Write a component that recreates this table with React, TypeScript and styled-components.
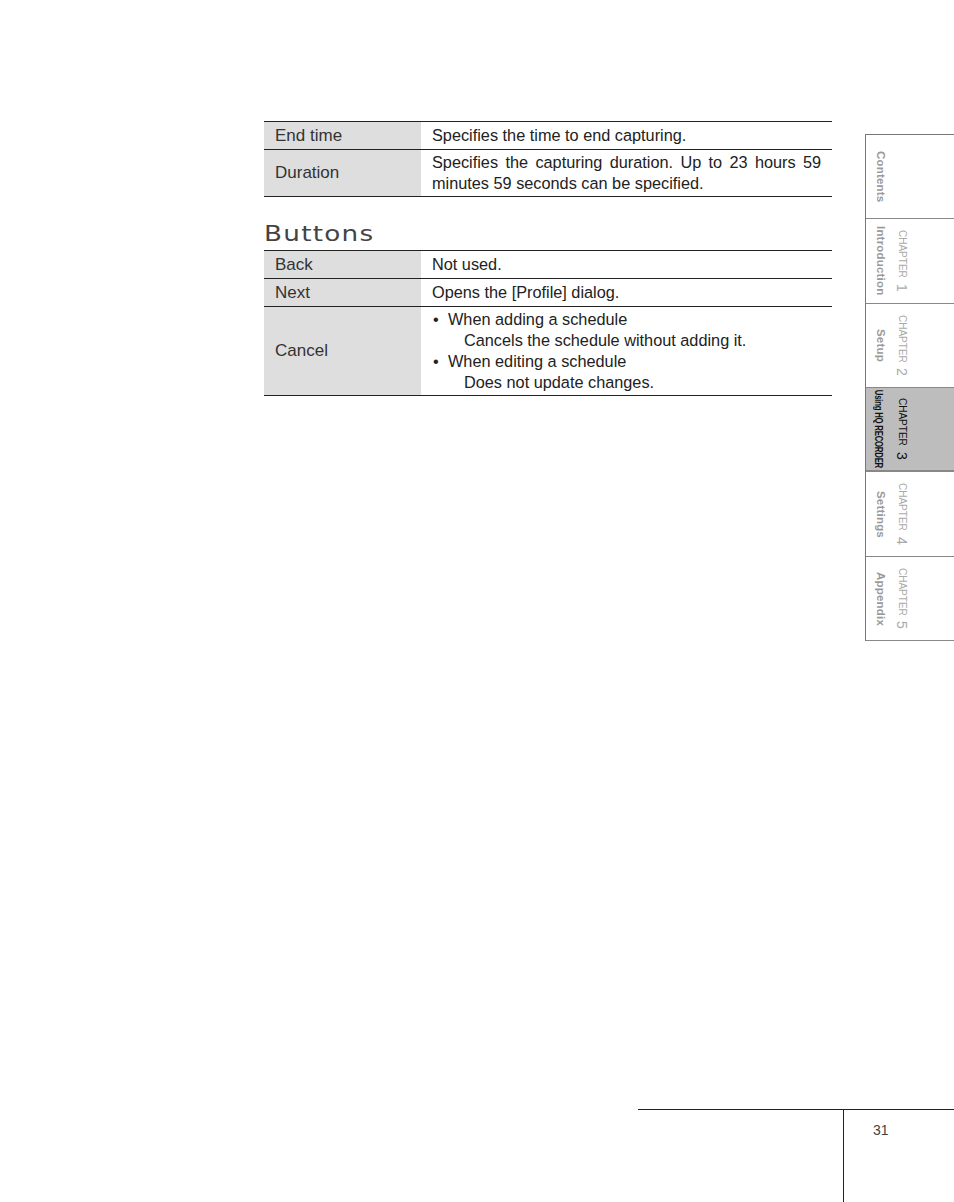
import React from "react";
import styled, { createGlobalStyle } from "styled-components";

const Global = createGlobalStyle`
  html, body { margin: 0; padding: 0; background: #fff; }
  body { font-family: "Liberation Sans", Arial, sans-serif; }
`;

const Page = styled.div`
  width: 954px;
  height: 1202px;
  display: flex;
  flex-direction: column;
  overflow: hidden;
`;

const Top = styled.div`
  display: flex;
  align-items: flex-start;
`;

const Main = styled.main`
  margin-left: 264px;
  padding-top: 121px;
  width: 569px;
`;

const Table = styled.div`
  border-top: 1px solid #222;
  display: flex;
  flex-direction: column;
`;

const Row = styled.div`
  display: grid;
  grid-template-columns: 157px 1fr;
  min-height: 27px;
  border-bottom: 1px solid #222;
`;

const Label = styled.div`
  background: #dedede;
  display: flex;
  align-items: center;
  padding: 0 11px;
  font-size: 17px;
  color: #333;
`;

const Desc = styled.div`
  padding: 2px 11px;
  display: flex;
  flex-direction: column;
  justify-content: center;
  font-size: 16.3px;
  line-height: 21px;
  color: #222;
  text-align: justify;
`;

const Bullet = styled.div`
  display: flex;
  padding-left: 1px;
  &::before {
    content: "•";
    width: 15px;
  }
`;

const Sub = styled.div`
  padding-left: 32px;
`;

const Heading = styled.h2`
  margin: 24px 0 2px;
  font-family: "DejaVu Sans", sans-serif;
  font-weight: 400;
  font-size: 21px;
  line-height: 27px;
  letter-spacing: 1px;
  color: #444;
  transform: scaleX(1.25);
  transform-origin: left center;
`;

const Side = styled.nav`
  margin-left: 33px;
  margin-top: 134px;
  width: 88px;
  border-left: 1px solid #777;
  border-top: 1px solid #777;
  display: flex;
  flex-direction: column;
`;

const Tab = styled.div<{ $active?: boolean; $h: number }>`
  height: ${(p) => p.$h}px;
  box-sizing: border-box;
  border-bottom: ${(p) => (p.$active ? 2 : 1)}px solid #888;
  background: ${(p) => (p.$active ? "#bdbdbd" : "#fff")};
  display: flex;
  padding-left: ${(p) => (p.$active ? 7 : 9)}px;
  gap: ${(p) => (p.$active ? 12 : 10)}px;
`;

const Vert = styled.div`
  writing-mode: vertical-rl;
  align-self: center;
  white-space: nowrap;
`;

const TabName = styled(Vert)<{ $active?: boolean }>`
  font-size: ${(p) => (p.$active ? "10.5px" : "11.5px")};
  font-weight: bold;
  color: ${(p) => (p.$active ? "#111" : "#9a9a9a")};
  letter-spacing: ${(p) => (p.$active ? "-0.3px" : "0.2px")};
  transform: ${(p) => (p.$active ? "scaleY(0.74)" : "none")};
  width: 12px;
`;

const Chapter = styled(Vert)<{ $active?: boolean }>`
  font-size: 10px;
  color: ${(p) => (p.$active ? "#111" : "#aaa")};
  width: 13px;
  span {
    font-size: 14px;
    margin-top: 3px;
    display: inline-block;
  }
`;

const Footer = styled.footer`
  margin-top: auto;
  margin-left: 638px;
  height: 92px;
  border-top: 1px solid #222;
  display: flex;
`;

const FooterLeft = styled.div`
  width: 205px;
  border-right: 1px solid #222;
`;

const PageNum = styled.div`
  padding: 12px 0 0 29px;
  font-size: 14px;
  color: #444;
`;

const tabs = [
  { name: "Contents", h: 84 },
  { name: "Introduction", ch: "1", h: 85 },
  { name: "Setup", ch: "2", h: 84 },
  { name: "Using HQ RECORDER", ch: "3", h: 84, active: true },
  { name: "Settings", ch: "4", h: 85 },
  { name: "Appendix", ch: "5", h: 84 },
];

export default function App() {
  return (
    <Page>
      <Global />
      <Top>
        <Main>
          <Table>
            <Row>
              <Label>End time</Label>
              <Desc>Specifies the time to end capturing.</Desc>
            </Row>
            <Row>
              <Label>Duration</Label>
              <Desc>
                <div>
                  Specifies the capturing duration. Up to 23 hours 59 minutes 59 seconds can be specified.
                </div>
              </Desc>
            </Row>
          </Table>
          <Heading>Buttons</Heading>
          <Table>
            <Row>
              <Label>Back</Label>
              <Desc>Not used.</Desc>
            </Row>
            <Row>
              <Label>Next</Label>
              <Desc>Opens the [Profile] dialog.</Desc>
            </Row>
            <Row>
              <Label>Cancel</Label>
              <Desc>
                <Bullet>When adding a schedule</Bullet>
                <Sub>Cancels the schedule without adding it.</Sub>
                <Bullet>When editing a schedule</Bullet>
                <Sub>Does not update changes.</Sub>
              </Desc>
            </Row>
          </Table>
        </Main>
        <Side>
          {tabs.map((t) => (
            <Tab key={t.name} $active={t.active} $h={t.h}>
              <TabName $active={t.active}>{t.name}</TabName>
              {t.ch && (
                <Chapter $active={t.active}>
                  CHAPTER <span>{t.ch}</span>
                </Chapter>
              )}
            </Tab>
          ))}
        </Side>
      </Top>
      <Footer>
        <FooterLeft />
        <PageNum>31</PageNum>
      </Footer>
    </Page>
  );
}
